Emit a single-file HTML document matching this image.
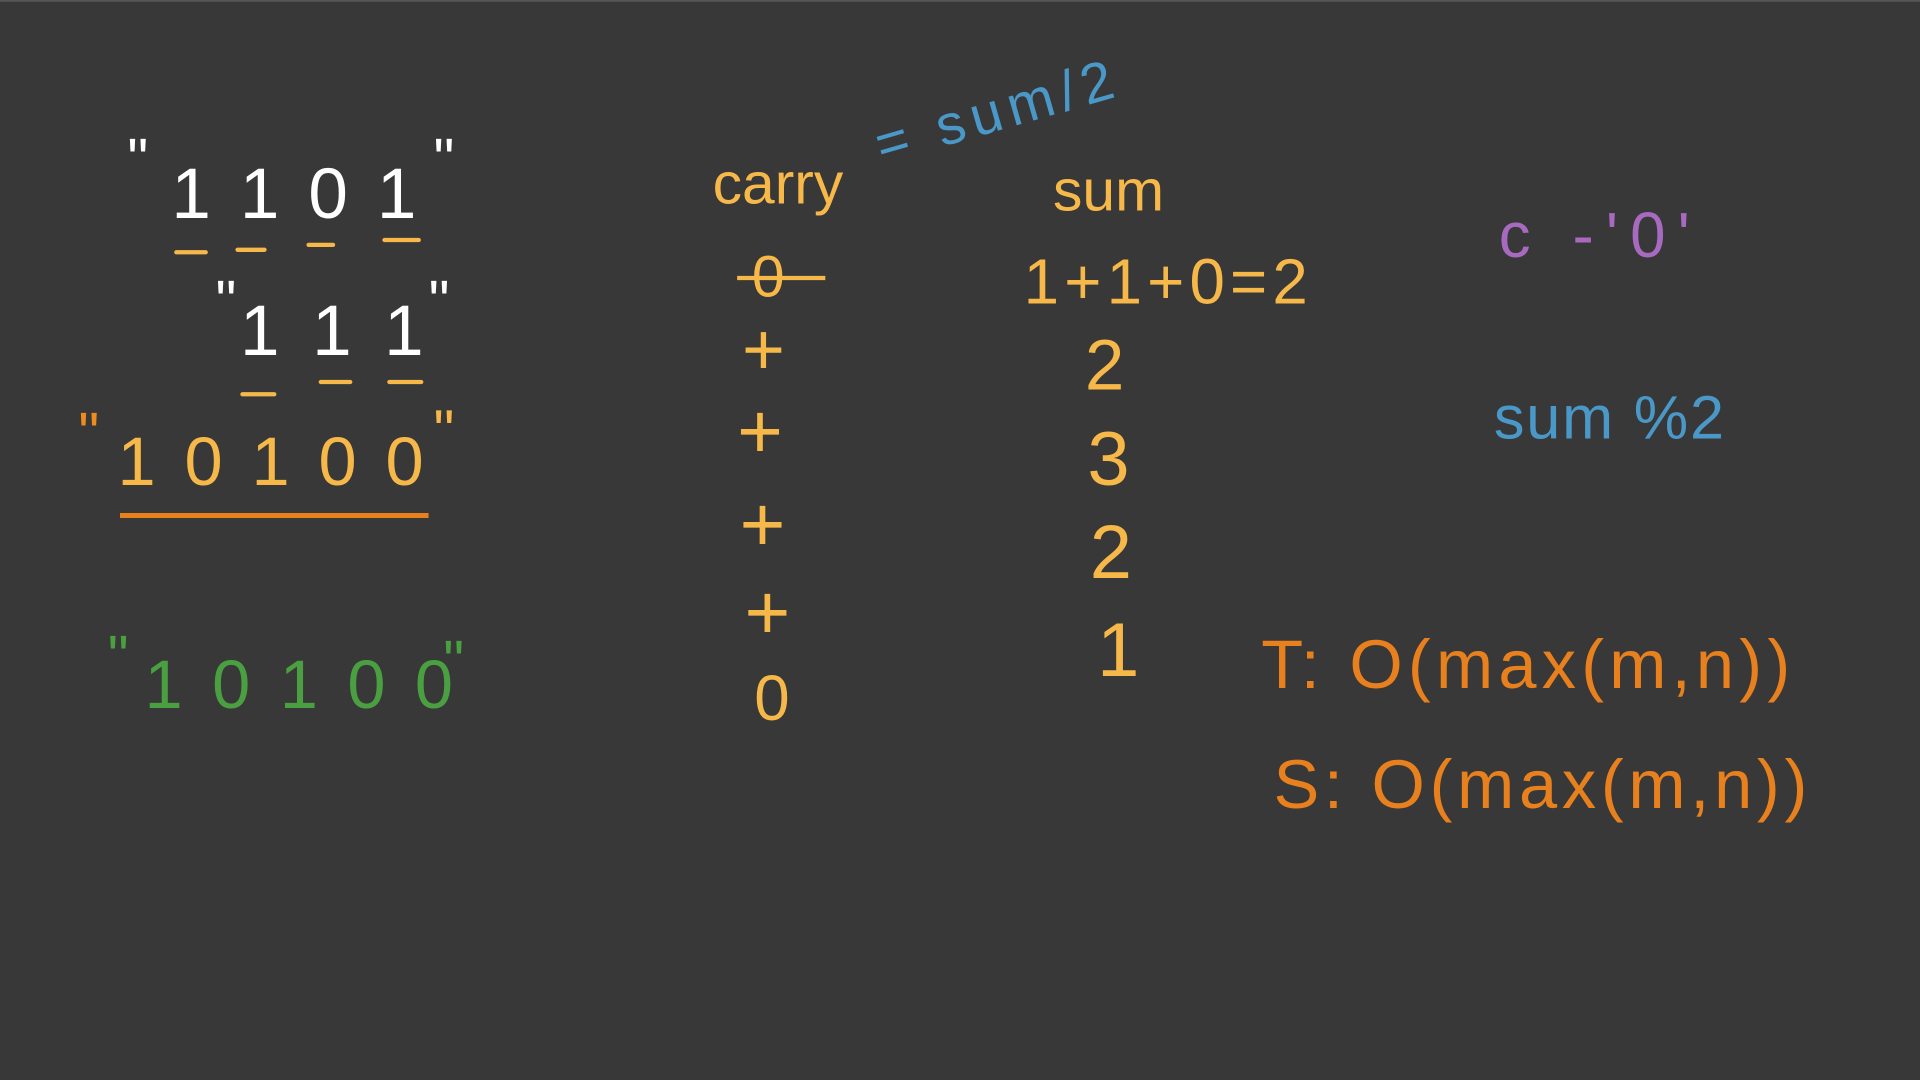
<!DOCTYPE html>
<html><head><style>
html,body{margin:0;padding:0;background:#383838;overflow:hidden}
svg{display:block}
text{font-family:"Liberation Sans",sans-serif}
</style></head><body>
<svg width="1920" height="1080" viewBox="0 0 1568 882" preserveAspectRatio="none">
<rect width="1568" height="882" fill="#383838"/>
<rect width="1568" height="1.5" fill="#555"/>
<g fill="#fff" font-size="58">
<text x="104" y="146" font-size="48">"</text>
<text x="140" y="178" textLength="200" lengthAdjust="spacing">1 1 0 1</text>
<text x="354" y="146" font-size="48">"</text>
<text x="176" y="262" font-size="48">"</text>
<text x="196" y="290" textLength="150" lengthAdjust="spacing">1 1 1</text>
<text x="350" y="262" font-size="48">"</text>
</g>
<g stroke="#f7b84a" stroke-width="3.5" stroke-linecap="round">
<line x1="144" y1="206" x2="168" y2="206"/><line x1="194" y1="204" x2="216" y2="204"/>
<line x1="252" y1="200" x2="272" y2="200"/><line x1="314" y1="196" x2="342" y2="196"/>
<line x1="198" y1="322" x2="224" y2="322"/><line x1="262" y1="312" x2="286" y2="312"/>
<line x1="318" y1="312" x2="344" y2="312"/>
</g>
<g fill="#f7b84a" font-size="56">
<text x="64" y="370" font-size="48" fill="#f08c1e">"</text>
<text x="96" y="396" textLength="250" lengthAdjust="spacing">1 0 1 0 0</text>
<text x="354" y="368" font-size="48">"</text>
</g>
<line x1="98" y1="421" x2="350" y2="421" stroke="#e9801e" stroke-width="4"/>
<g fill="#4aa040" font-size="56">
<text x="88" y="552" font-size="48">"</text>
<text x="118" y="578" textLength="252" lengthAdjust="spacing">1 0 1 0 0</text>
<text x="362" y="556" font-size="48">"</text>
</g>
<g fill="#f7b84a">
<text x="582" y="166" font-size="48">carry</text>
<text x="860" y="172" font-size="48">sum</text>
<text x="614" y="242" font-size="48">0</text>
<line x1="602" y1="227" x2="674" y2="227" stroke="#f7b84a" stroke-width="3.5"/>
<text x="836" y="248" font-size="52" textLength="232" lengthAdjust="spacing">1+1+0=2</text>
<text x="606" y="306" font-size="60">+</text>
<text x="886" y="318" font-size="58">2</text>
<text x="602" y="374" font-size="64">+</text>
<text x="888" y="396" font-size="62">3</text>
<text x="604" y="450" font-size="64">+</text>
<text x="890" y="472" font-size="62">2</text>
<text x="608" y="522" font-size="64">+</text>
<text x="896" y="552" font-size="62">1</text>
<text x="616" y="588" font-size="52">0</text>
</g>
<g fill="#4a98c8">
<text x="720" y="134" font-size="46" transform="rotate(-16 720 134)" textLength="200" lengthAdjust="spacing">= sum/2</text>
<text x="1220" y="358" font-size="50" textLength="188" lengthAdjust="spacing">sum %2</text>
</g>
<text x="1224" y="210" font-size="52" fill="#a86ac0" textLength="156" lengthAdjust="spacing">c -'0'</text>
<g fill="#e9801e" font-size="56">
<text x="1030" y="562" textLength="432" lengthAdjust="spacing">T: O(max(m,n))</text>
<text x="1040" y="660" textLength="436" lengthAdjust="spacing">S: O(max(m,n))</text>
</g>
</svg>
</body></html>
